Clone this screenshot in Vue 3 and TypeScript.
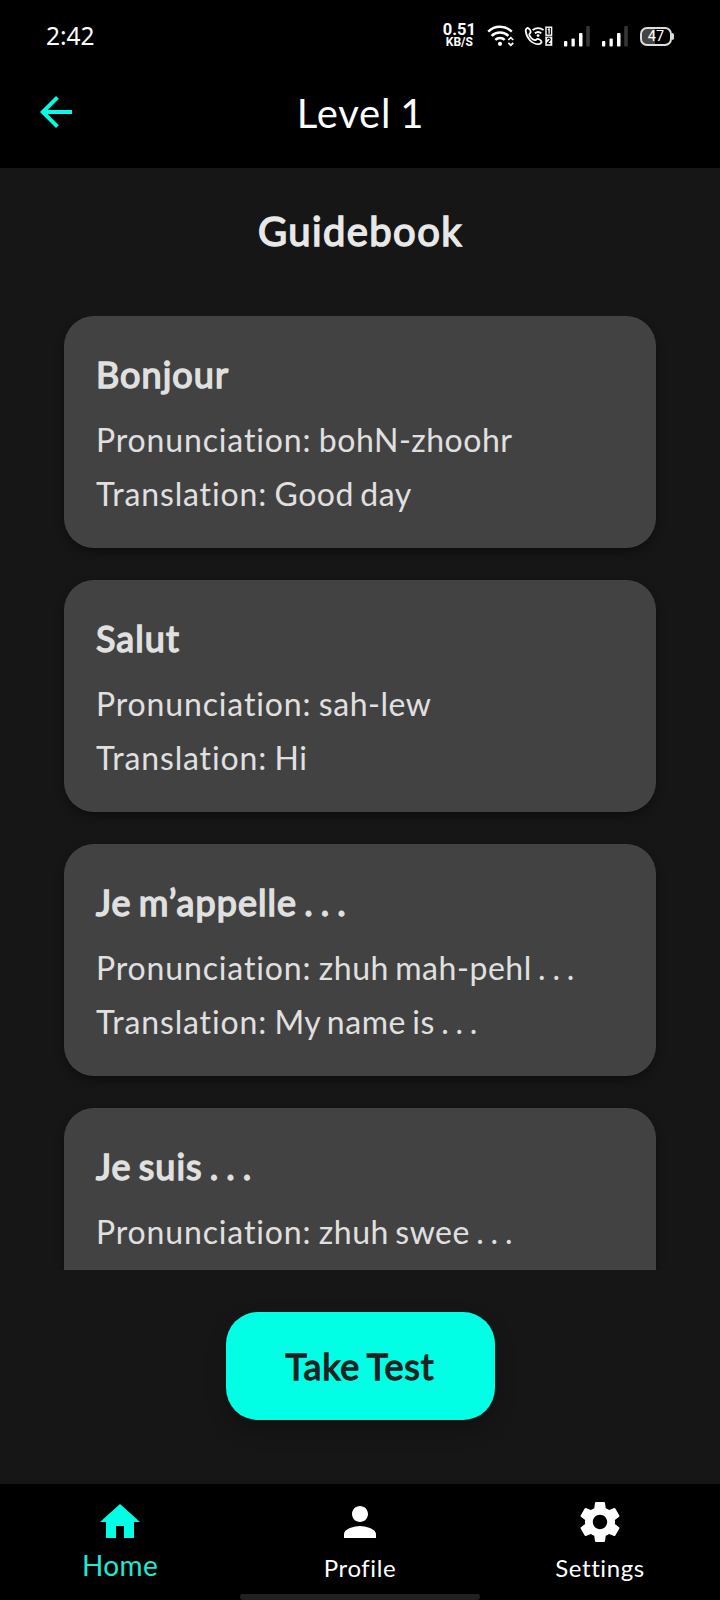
<script setup lang="ts">
interface Phrase {
  title: string
  pronunciation: string
  translation: string
}

interface NavItem {
  label: string
  icon: string
  active: boolean
}

const phrases: Phrase[] = [
  { title: 'Bonjour', pronunciation: 'bohN-zhoohr', translation: 'Good day' },
  { title: 'Salut', pronunciation: 'sah-lew', translation: 'Hi' },
  { title: 'Je m’appelle . . .', pronunciation: 'zhuh mah-pehl . . .', translation: 'My name is . . .' },
  { title: 'Je suis . . .', pronunciation: 'zhuh swee . . .', translation: '' },
]

const navItems: NavItem[] = [
  { label: 'Home', icon: 'M10 20v-6h4v6h5v-8h3L12 3 2 12h3v8z', active: true },
  {
    label: 'Profile',
    icon: 'M12 12c2.21 0 4-1.79 4-4s-1.79-4-4-4-4 1.79-4 4 1.79 4 4 4zm0 2c-2.67 0-8 1.34-8 4v2h16v-2c0-2.66-5.33-4-8-4z',
    active: false,
  },
  {
    label: 'Settings',
    icon: 'M19.43 12.98c.04-.32.07-.64.07-.98s-.03-.66-.07-.98l2.11-1.65c.19-.15.24-.42.12-.64l-2-3.46c-.12-.22-.39-.3-.61-.22l-2.49 1c-.52-.4-1.08-.73-1.69-.98l-.38-2.65C14.46 2.18 14.25 2 14 2h-4c-.25 0-.46.18-.49.42l-.38 2.65c-.61.25-1.17.59-1.69.98l-2.49-1c-.23-.09-.49 0-.61.22l-2 3.46c-.13.22-.07.49.12.64l2.11 1.65c-.04.32-.07.65-.07.98s.03.66.07.98l-2.11 1.65c-.19.15-.24.42-.12.64l2 3.46c.12.22.39.3.61.22l2.49-1c.52.4 1.08.73 1.69.98l.38 2.65c.03.24.24.42.49.42h4c.25 0 .46-.18.49-.42l.38-2.65c.61-.25 1.17-.59 1.69-.98l2.49 1c.23.09.49 0 .61-.22l2-3.46c.12-.22.07-.49-.12-.64l-2.11-1.65zM12 15.6c-1.98 0-3.6-1.62-3.6-3.6s1.62-3.6 3.6-3.6 3.6 1.62 3.6 3.6-1.62 3.6-3.6 3.6z',
    active: false,
  },
]
</script>

<template>
  <div class="screen">
    <div class="status">
      <span class="clock">2:42</span>
      <div class="indicators">
        <div class="speed">
          <b>0.51</b>
          <small>KB/S</small>
        </div>
        <svg class="wifi" width="28" height="22" viewBox="0 0 28 22" fill="none" stroke="#fff" stroke-width="2.5">
          <path d="M1.2 6.6a17 17 0 0 1 23.6 0M4.6 10.8a12.2 12.2 0 0 1 16.8 0M8.3 14.8a6.8 6.8 0 0 1 9.4 0" />
          <circle cx="13" cy="18.8" r="2.1" fill="#fff" stroke="none" />
          <path d="M21.3 15l2.5-2.4 2.5 2.4M21.3 17.8l2.5 2.4 2.5-2.4" stroke-width="1.7" />
        </svg>
        <svg class="call" width="30" height="20" viewBox="0 0 30 20" fill="none" stroke="#fff">
          <path
            d="M1.700 4.800C1.500 3 3.200 1.500 4.400 2.200c1.300.8 2.500 3 2.200 4.100-.2.900-1.600 1.400-1.300 2.400.9 2.600 3 4.700 5.700 5.500 1 .2 1.500-1.300 2.500-1.300 1.200 0 3.400 1.300 3.900 2.400.6 1.200-1 2.900-2.800 2.900C7.500 18.200 2.200 11.500 1.700 4.800z"
            stroke-width="1.800"
            stroke-linejoin="round"
          />
          <path d="M8.600 4.200a8.200 8.200 0 0 1 11 0M10.900 7.300a5 5 0 0 1 6.400 0" stroke-width="1.800" />
          <circle cx="14.100" cy="9.600" r="1.400" fill="#fff" stroke="none" />
          <rect x="22" y="1.200" width="5.600" height="8" stroke-width="1.400" />
          <path d="M23.800 3.700l1.300-.6v4.700" stroke-width="1.300" />
          <rect x="21.300" y="10.600" width="7" height="9.200" fill="#fff" stroke="none" />
          <path d="M23.200 13.300c.4-1.600 3.200-1.400 3 .3-.1 1.300-2.600 2.500-2.900 4h3.200" stroke="#000" stroke-width="1.200" />
        </svg>
        <svg v-for="n in 2" :key="n" class="signal" width="26" height="21" viewBox="0 0 26 21">
          <g fill="#fff">
            <rect y="15" width="3.300" height="5.500" rx="1" />
            <rect x="7.500" y="12.500" width="3.300" height="8" rx="1" />
            <rect x="15" y="7" width="3.500" height="13.500" rx="1" />
          </g>
          <rect x="22.200" width="3.600" height="20.500" rx="1" fill="#353535" />
        </svg>
        <div class="battery"><span>47</span></div>
      </div>
    </div>

    <header class="bar">
      <svg class="back" width="48" height="48" viewBox="0 0 24 24" fill="#00ffe5">
        <path d="M20 11H7.830l5.590-5.590L12 4l-8 8 8 8 1.410-1.410L7.830 13H20z" />
      </svg>
      <h1>Level 1</h1>
    </header>

    <main class="body">
      <h2>Guidebook</h2>
      <div class="list">
        <article v-for="p in phrases" :key="p.title" class="card">
          <h3>{{ p.title }}</h3>
          <p><span class="label">Pronunciation: </span>{{ p.pronunciation }}</p>
          <p v-if="p.translation"><span class="label">Translation: </span>{{ p.translation }}</p>
        </article>
      </div>
      <button class="test" type="button"><span>Take Test</span></button>
    </main>

    <nav class="nav">
      <a v-for="item in navItems" :key="item.label" :class="['tab', { active: item.active }]">
        <svg width="48" height="48" viewBox="0 0 24 24" fill="currentColor"><path :d="item.icon" /></svg>
        <span>{{ item.label }}</span>
      </a>
      <i class="gesture"></i>
    </nav>
  </div>
</template>

<style>
body {
  margin: 0;
  background: #000;
}
</style>

<style scoped>
.screen {
  width: 720px;
  height: 1600px;
  display: flex;
  flex-direction: column;
  overflow: hidden;
  background: #161616;
  color: #e0e0e0;
  font-family: Lato, sans-serif;
}

.status {
  height: 72px;
  flex: none;
  box-sizing: border-box;
  padding: 0 46px;
  display: flex;
  justify-content: space-between;
  align-items: center;
  background: #000;
  color: #fff;
}

.clock {
  font: 400 24.5px/30px 'Noto Sans', sans-serif;
  margin-top: -1px;
}

.indicators {
  display: flex;
  align-items: center;
}

.speed {
  display: flex;
  flex-direction: column;
  align-items: center;
  font-family: Roboto, sans-serif;
  margin-right: 11px;
}

.speed b {
  font-size: 16.5px;
  line-height: 13px;
}

.speed small {
  font-size: 12px;
  font-weight: 700;
  line-height: 13px;
}

.wifi {
  margin-right: 9px;
}

.call {
  margin-right: 10px;
}

.signal {
  margin-right: 12px;
}

.battery {
  position: relative;
  box-sizing: border-box;
  width: 32px;
  height: 19px;
  border: 2px solid #ddd;
  border-radius: 7px;
  margin-right: 2px;
  background: linear-gradient(90deg, #444 47%, #000 47%);
  font: 400 14.5px/16px Roboto, sans-serif;
  text-align: center;
}

.battery::after {
  content: '';
  position: absolute;
  left: 30px;
  top: 4px;
  width: 2px;
  height: 7px;
  border-radius: 0 2px 2px 0;
  background: #ddd;
}

.bar {
  height: 96px;
  flex: none;
  display: grid;
  grid-template-columns: 80px 1fr 80px;
  align-items: center;
  background: #000;
  color: #fff;
}

.back {
  margin: -16px 0 0 32px;
}

h1 {
  margin: -15px 0 0 1px;
  font-size: 40px;
  line-height: 48px;
  font-weight: 400;
  letter-spacing: 0.8px;
  word-spacing: -2px;
  text-align: center;
}

.body {
  flex: 1;
  min-height: 0;
  display: flex;
  flex-direction: column;
  align-items: center;
}

h2,
h3,
.test span {
  font-weight: 400;
  -webkit-text-stroke: 1.5px currentColor;
}

h2 {
  margin: 39px 0 61px 1px;
  font-size: 40px;
  line-height: 48px;
  letter-spacing: 1.4px;
  color: #e8e8e8;
}

.list {
  box-sizing: border-box;
  width: 100%;
  height: 954px;
  flex: none;
  padding: 0 64px;
  overflow: hidden;
  display: flex;
  flex-direction: column;
  gap: 32px;
}

.card {
  box-sizing: border-box;
  height: 232px;
  flex: none;
  padding: 32px;
  border-radius: 30px;
  background: #424242;
  box-shadow: 0 4px 10px rgba(0, 0, 0, 0.4);
}

h3 {
  margin: 3px 0 23px;
  font-size: 36px;
  line-height: 46px;
  letter-spacing: 1.05px;
  word-spacing: -3.3px;
}

p {
  margin: 0 0 14px;
  font-size: 32px;
  line-height: 40px;
  letter-spacing: 0.55px;
  word-spacing: -2.5px;
  white-space: nowrap;
}

.label {
  letter-spacing: 0.85px;
  word-spacing: -1.6px;
}

.test {
  width: 269px;
  height: 108px;
  margin-top: 42px;
  padding: 0;
  border: 0;
  border-radius: 32px;
  background: #00ffe5;
  color: #212121;
  font: 400 36px/46px Lato, sans-serif;
  letter-spacing: 0.8px;
  word-spacing: -2.2px;
  box-shadow: 0 10px 20px rgba(0, 0, 0, 0.25);
}

.test span {
  -webkit-text-stroke-width: 1.3px;
}

.nav {
  position: relative;
  height: 116px;
  flex: none;
  display: grid;
  grid-template-columns: repeat(3, 1fr);
  background: #000;
  color: #fff;
}

.tab {
  display: flex;
  flex-direction: column;
  align-items: center;
  padding-top: 14px;
}

.tab span {
  margin-top: 6px;
  font-size: 24px;
  line-height: 32px;
  letter-spacing: 0.6px;
}

.tab.active span {
  margin-top: 3px;
  color: #1fe9d3;
  font-size: 28px;
  letter-spacing: 0.4px;
}

.active svg {
  color: #00ffe5;
}

.gesture {
  position: absolute;
  left: 240px;
  bottom: 0;
  width: 240px;
  height: 6px;
  border-radius: 3px;
  background: #212121;
}
</style>
